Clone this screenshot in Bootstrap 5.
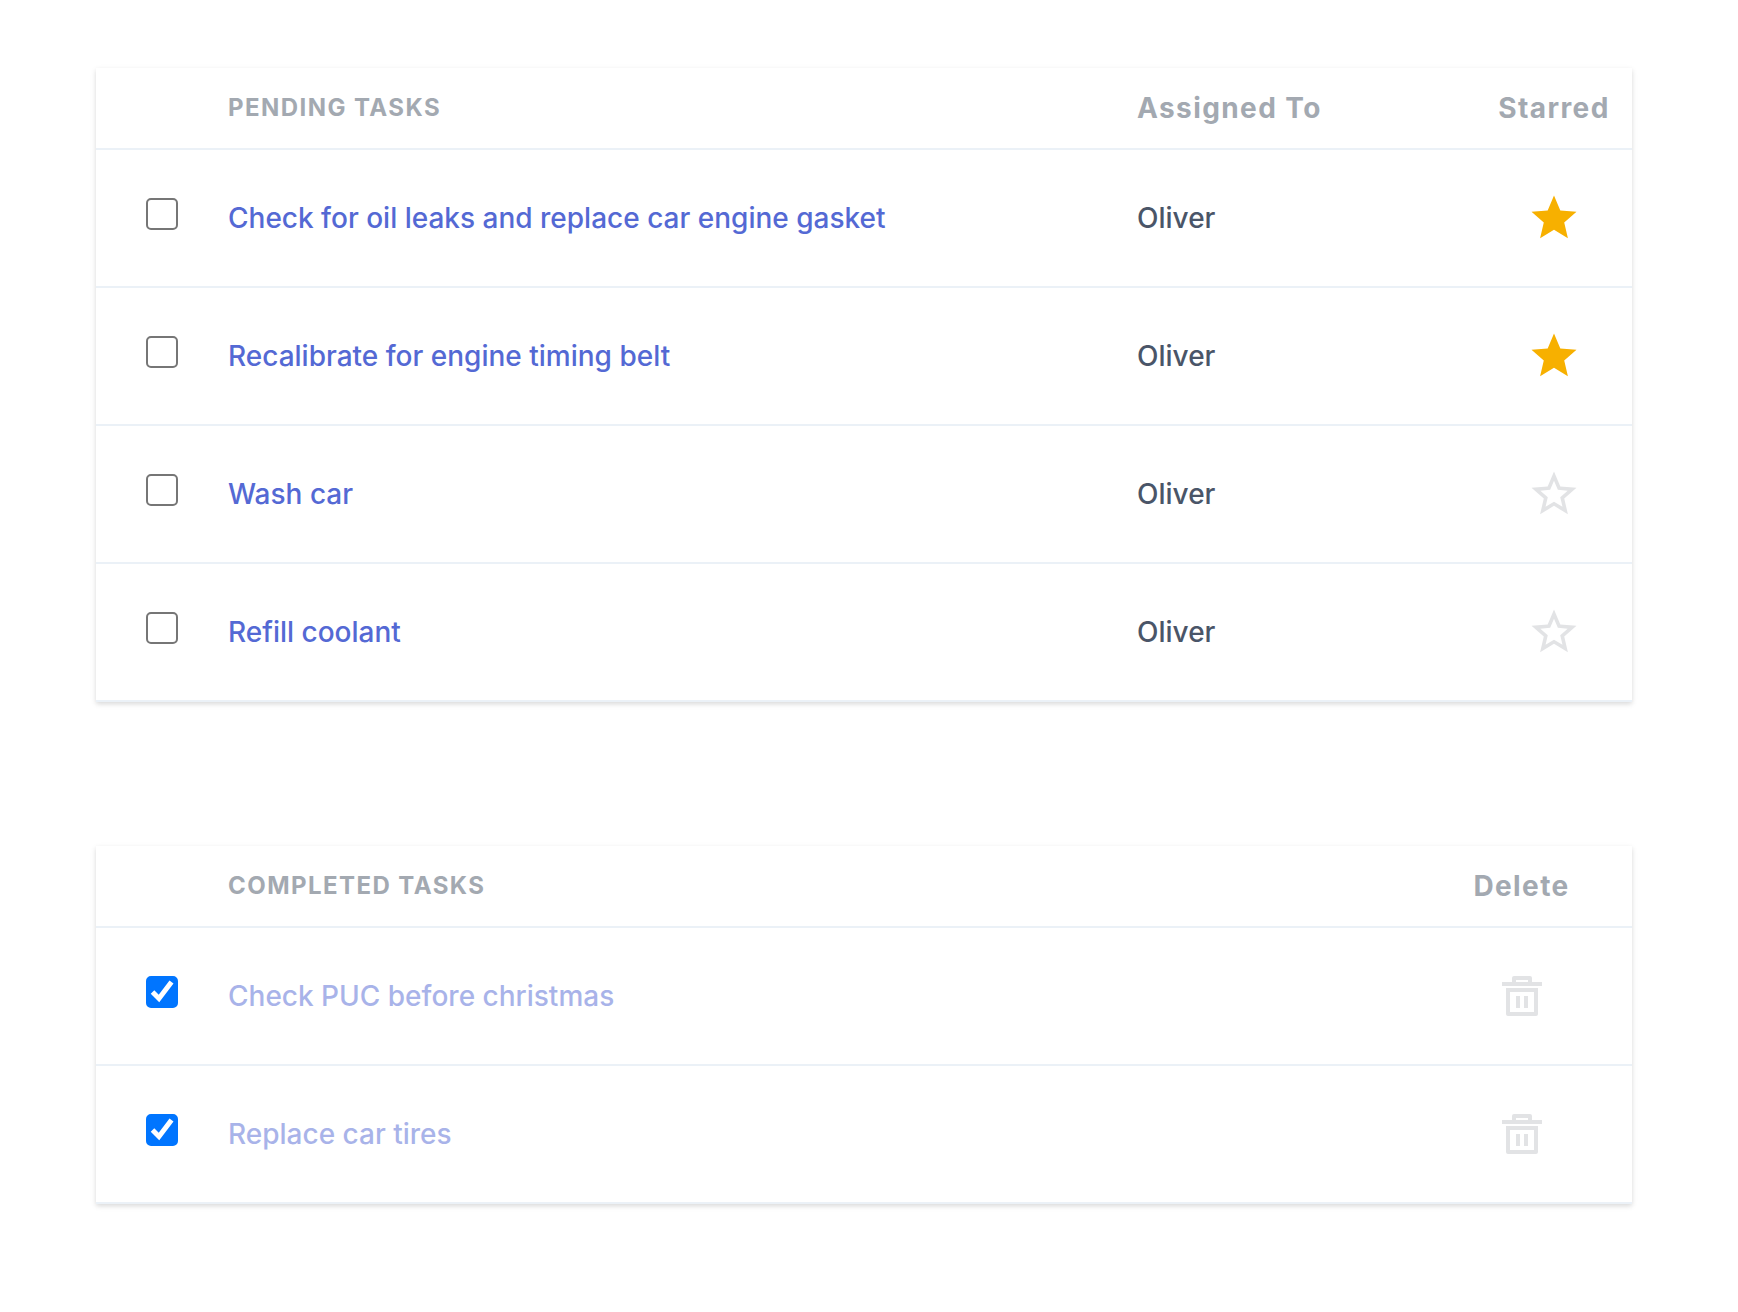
<!DOCTYPE html>
<html lang="en">
<head>
<meta charset="utf-8">
<meta name="viewport" content="width=device-width, initial-scale=1">
<title>Tasks</title>
<link href="https://cdn.jsdelivr.net/npm/bootstrap@5.3.0/dist/css/bootstrap.min.css" rel="stylesheet">
<style>
  body { font-family: Inter, "Open Sans", sans-serif; font-size: 28px; line-height: 40px; color: #4a5568; background: #fff; }
  .task-page { padding: 68px 106px 96px 96px; }
  .task-panel { box-shadow: 0 2px 6px rgba(0, 0, 0, .1), 0 2px 4px rgba(0, 0, 0, .06); }
  .task-panel + .task-panel { margin-top: 144px; }
  .task-table { --bs-table-bg: #fff; --bs-table-color: #4a5568; table-layout: fixed; border-collapse: separate; border-spacing: 0; font-weight: 500; }
  .task-table > :not(caption) > * > * { padding: 0; border-bottom: 2px solid #ebf1f7; }
  .task-table > thead > tr > th { height: 82px; vertical-align: middle; color: #a3a9b1; font-weight: 700; letter-spacing: .05em; }
  .task-table > tbody > tr > td { height: 138px; }
  .task-table > thead > tr > .task-title { font-size: 24px; letter-spacing: .06em; }
  .col-check { width: 132px; }
  .col-person { width: 339px; }
  .col-star { width: 156px; }
  .col-delete { width: 221px; }
  .task-link { color: #5469d4; text-decoration: none; }
  .is-done .task-link { opacity: .5; }
  .task-check.form-check-input { display: block; width: 32px; height: 32px; margin: 0 0 8px 50px; border: 2px solid #767676; border-radius: 5px; }
  .task-check.form-check-input:checked {
    border-color: #0075ff; background-color: #0075ff; background-origin: border-box; background-size: 32px 32px;
    background-image: url("data:image/svg+xml,%3Csvg xmlns='http://www.w3.org/2000/svg' viewBox='0 0 32 32'%3E%3Cpath fill='none' stroke='%23fff' stroke-width='5' d='M6.500 16l6.500 6.500L25.500 6'/%3E%3C/svg%3E");
  }
  .icon-btn { color: #e2e3e5; line-height: 1; border: 0; }
  .icon-btn.is-starred { color: #f7b000; }
  .icon-btn svg { display: block; fill: currentColor; }
</style>
</head>
<body>
<svg class="d-none" aria-hidden="true">
  <symbol id="star-full" viewBox="0 0 24 24"><path d="M12 17.27L18.18 21l-1.64-7.03L22 9.24l-7.19-.61L12 2 9.19 8.63 2 9.24l5.46 4.73L5.82 21z"/></symbol>
  <symbol id="star-line" viewBox="0 0 24 24"><path d="M22 9.24l-7.19-.62L12 2 9.19 8.63 2 9.24l5.46 4.73L5.82 21 12 17.27 18.18 21l-1.63-7.03L22 9.24zM12 15.4l-3.76 2.27 1-4.28-3.32-2.88 4.38-.38L12 6.1l1.71 4.04 4.38.38-3.32 2.88 1 4.28L12 15.4z"/></symbol>
  <symbol id="trash" viewBox="0 0 20 20"><path fill-rule="evenodd" d="M0 3h5V1a1 1 0 0 1 1-1h8a1 1 0 0 1 1 1v2h5v2H0zM7 2v1h6V2zM2 6h16v13a1 1 0 0 1-1 1H3a1 1 0 0 1-1-1zM4 8v10h12V8zM7 10h2v6H7zM11 10h2v6h-2z"/></symbol>
</svg>
<main class="task-page">
  <section class="task-panel">
    <table class="table task-table align-middle mb-0">
      <thead>
        <tr>
          <th class="col-check"></th>
          <th class="task-title text-uppercase" scope="col">Pending Tasks</th>
          <th class="col-person" scope="col">Assigned To</th>
          <th class="col-star text-center" scope="col">Starred</th>
        </tr>
      </thead>
      <tbody>
        <tr>
          <td><input class="form-check-input task-check" type="checkbox" aria-labelledby="task-1"></td>
          <td><a class="task-link" id="task-1" href="#">Check for oil leaks and replace car engine gasket</a></td>
          <td>Oliver</td>
          <td><button class="btn icon-btn is-starred p-0 d-block mx-auto" type="button" aria-label="Remove star"><svg width="54" height="54"><use href="#star-full"/></svg></button></td>
        </tr>
        <tr>
          <td><input class="form-check-input task-check" type="checkbox" aria-labelledby="task-2"></td>
          <td><a class="task-link" id="task-2" href="#">Recalibrate for engine timing belt</a></td>
          <td>Oliver</td>
          <td><button class="btn icon-btn is-starred p-0 d-block mx-auto" type="button" aria-label="Remove star"><svg width="54" height="54"><use href="#star-full"/></svg></button></td>
        </tr>
        <tr>
          <td><input class="form-check-input task-check" type="checkbox" aria-labelledby="task-3"></td>
          <td><a class="task-link" id="task-3" href="#">Wash car</a></td>
          <td>Oliver</td>
          <td><button class="btn icon-btn p-0 d-block mx-auto" type="button" aria-label="Add star"><svg width="54" height="54"><use href="#star-line"/></svg></button></td>
        </tr>
        <tr>
          <td><input class="form-check-input task-check" type="checkbox" aria-labelledby="task-4"></td>
          <td><a class="task-link" id="task-4" href="#">Refill coolant</a></td>
          <td>Oliver</td>
          <td><button class="btn icon-btn p-0 d-block mx-auto" type="button" aria-label="Add star"><svg width="54" height="54"><use href="#star-line"/></svg></button></td>
        </tr>
      </tbody>
    </table>
  </section>

  <section class="task-panel">
    <table class="table task-table align-middle mb-0">
      <thead>
        <tr>
          <th class="col-check"></th>
          <th class="task-title text-uppercase" scope="col">Completed Tasks</th>
          <th class="col-delete text-center" scope="col">Delete</th>
        </tr>
      </thead>
      <tbody>
        <tr class="is-done">
          <td><input class="form-check-input task-check" type="checkbox" aria-labelledby="task-5" checked></td>
          <td><a class="task-link" id="task-5" href="#">Check PUC before christmas</a></td>
          <td><button class="btn icon-btn p-0 d-block mx-auto" type="button" aria-label="Delete task"><svg width="40" height="40"><use href="#trash"/></svg></button></td>
        </tr>
        <tr class="is-done">
          <td><input class="form-check-input task-check" type="checkbox" aria-labelledby="task-6" checked></td>
          <td><a class="task-link" id="task-6" href="#">Replace car tires</a></td>
          <td><button class="btn icon-btn p-0 d-block mx-auto" type="button" aria-label="Delete task"><svg width="40" height="40"><use href="#trash"/></svg></button></td>
        </tr>
      </tbody>
    </table>
  </section>
</main>
<script src="https://cdn.jsdelivr.net/npm/bootstrap@5.3.0/dist/js/bootstrap.bundle.min.js"></script>
</body>
</html>
